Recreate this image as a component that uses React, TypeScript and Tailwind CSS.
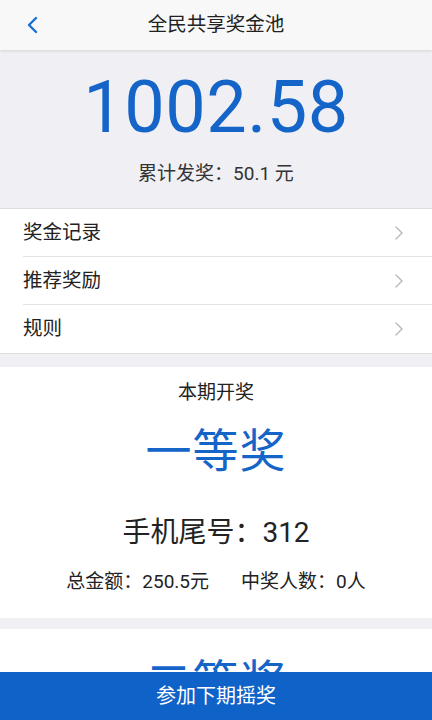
import React from 'react';

const font = "font-['Roboto','Noto_Sans_CJK_SC',sans-serif]";

const Chevron = () => (
  <svg width="10" height="16" viewBox="0 0 10 16" fill="none">
    <path d="M2 2l6 6-6 6" stroke="#b5b5b5" strokeWidth="1.3" strokeLinecap="round" strokeLinejoin="round" />
  </svg>
);

const rows = ['奖金记录', '推荐奖励', '规则'];

const App: React.FC = () => {
  return (
    <div className={`min-h-screen bg-[#efeff4] text-[#222] ${font}`}>
      <header className="h-[50px] bg-[#f8f8f8] grid grid-cols-[64px_1fr_64px] items-center shadow-[0_1px_3px_rgba(0,0,0,0.12)]">
        <div className="pl-[26px] flex items-center">
          <svg width="14" height="18" viewBox="0 0 14 18" fill="none">
            <path d="M10 2L3 9l7 7" stroke="#1a6fd6" strokeWidth="2.4" strokeLinecap="round" strokeLinejoin="round" />
          </svg>
        </div>
        <h1 className="text-center text-[19.5px] text-[#222]">全民共享奖金池</h1>
        <div />
      </header>

      <section className="h-[158px] flex flex-col items-center">
        <div className="text-[72px] leading-none text-[#1565c9] mt-[22px] tracking-[0.5px]">1002.58</div>
        <div className="text-[19px] text-[#333] mt-[16px]">累计发奖：50.1 元</div>
      </section>

      <ul className="bg-white border-t border-b border-[#dedede]">
        {rows.map((r, i) => (
          <li key={r} className="pl-[23px]">
            <div className={`h-[48px] flex items-center justify-between pr-[28px] ${i < rows.length - 1 ? 'border-b border-[#e3e3e3]' : ''}`}>
              <span className="text-[19.5px] text-[#222]">{r}</span>
              <Chevron />
            </div>
          </li>
        ))}
      </ul>

      <section className="bg-white mt-[13px] h-[251px] flex flex-col items-center">
        <div className="text-[19px] text-[#222] mt-[12px]">本期开奖</div>
        <div className="text-[46px] leading-none text-[#1565c9] mt-[20px] tracking-[1px]">一等奖</div>
        <div className="text-[28px] text-[#222] mt-[38px]">手机尾号：312</div>
        <div className="text-[19px] text-[#222] mt-[14px] flex gap-[32px]">
          <span>总金额：250.5元</span>
          <span>中奖人数：0人</span>
        </div>
      </section>

      <section className="bg-white mt-[11px] h-[250px] flex flex-col items-center">
        <div className="text-[46px] leading-none text-[#1565c9] mt-[30px] tracking-[1px]">二等奖</div>
      </section>

      <div className="h-[60px]" />

      <button className="fixed left-0 right-0 bottom-0 h-[48px] bg-[#0f62c8] text-white text-[20px] flex items-center justify-center">
        参加下期摇奖
      </button>
    </div>
  );
};

export default App;
